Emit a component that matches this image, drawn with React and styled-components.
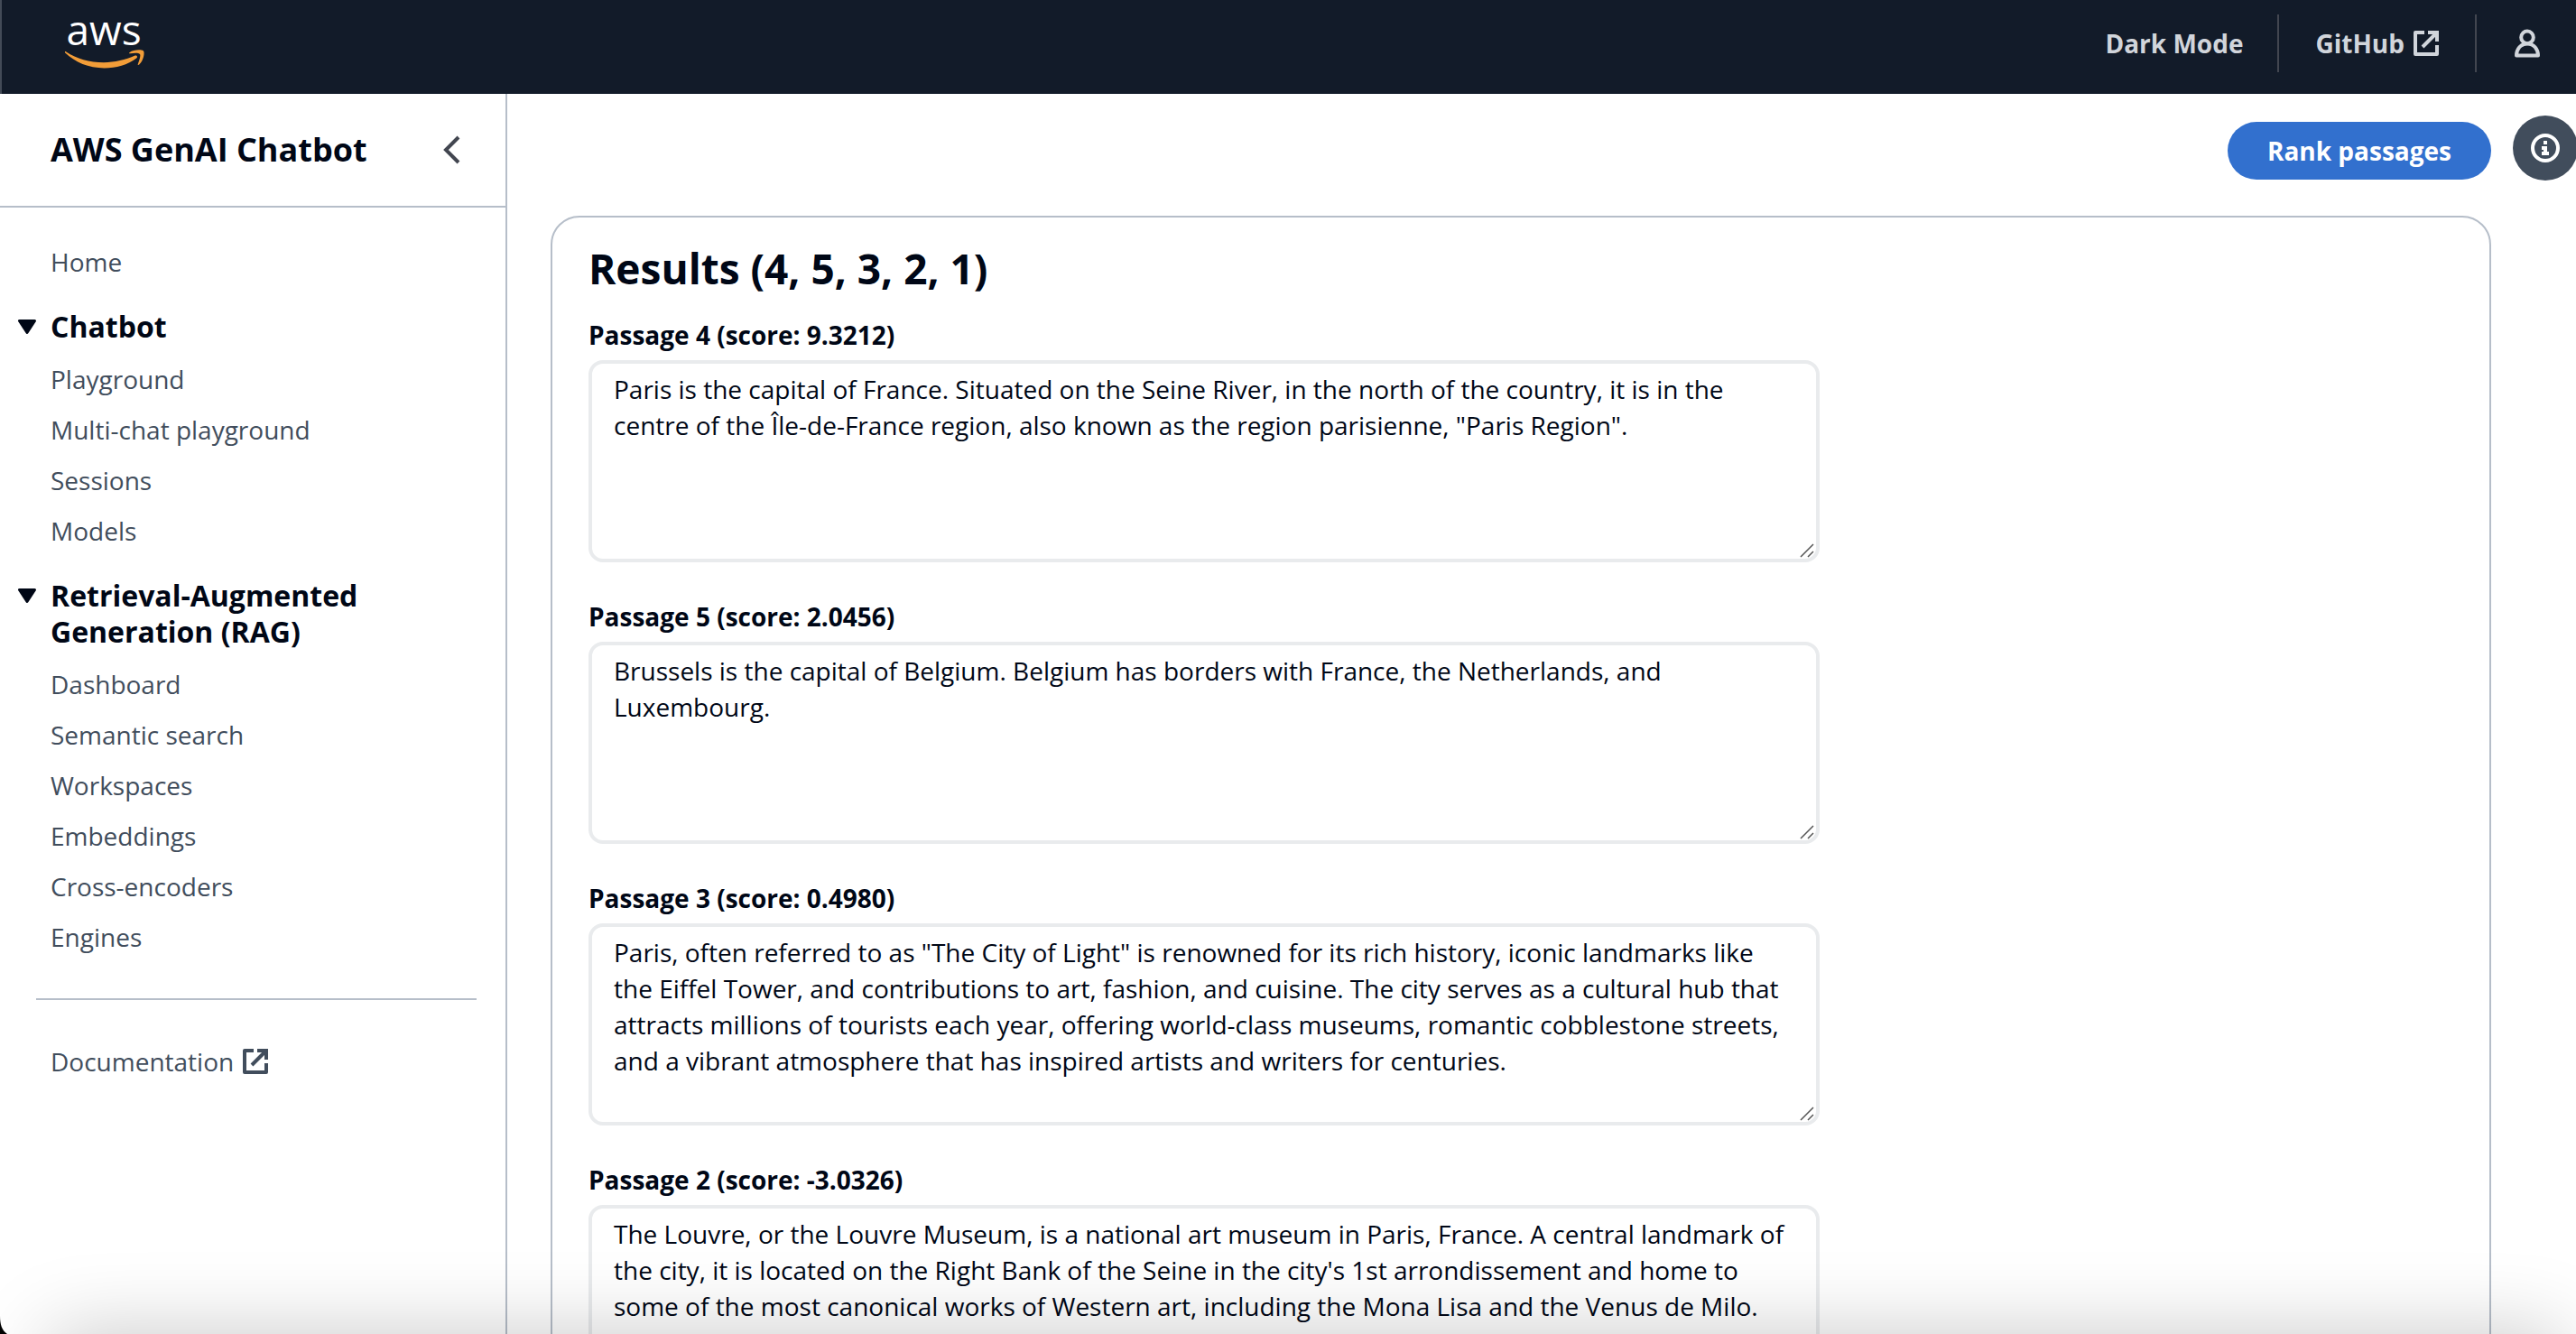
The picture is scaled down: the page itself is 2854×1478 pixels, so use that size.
import React, { useId } from "react";
import styled, { createGlobalStyle, css } from "styled-components";

const GlobalStyle = createGlobalStyle`
  *, *::before, *::after { box-sizing: border-box; }
  body {
    margin: 0;
    background: #ffffff;
    color: #000716;
    font-family: "Open Sans", "Noto Sans", sans-serif;
    font-size: 28px;
    line-height: 40px;
  }
  h1, h2, ul { margin: 0; padding: 0; }
  button, textarea { font: inherit; }
`;

const Shell = styled.div`
  display: flex;
  flex-direction: column;
  height: 100vh;
  overflow: hidden;
`;

const TopBar = styled.header`
  display: flex;
  align-items: center;
  justify-content: space-between;
  flex: none;
  height: 104px;
  padding: 0 0 8px 70px;
  background: #121b29;
  border-left: 2px solid #434b57;
`;

const HomeLink = styled.a`
  display: flex;
`;

const Utilities = styled.nav`
  display: flex;
  align-items: center;
`;

const utility = css`
  display: flex;
  align-items: center;
  gap: 8px;
  height: 64px;
  padding: 0 38px 0 40px;
  border: 0;
  border-left: ${(p) => (p.$divided ? "2px solid #424650" : "0")};
  background: none;
  color: #d1d5db;
  font-weight: 700;
  text-decoration: none;
`;

const UtilityButton = styled.button`
  ${utility}
`;

const UtilityLink = styled.a`
  ${utility}
`;

const Body = styled.div`
  display: flex;
  flex: 1;
  min-height: 0;
`;

const Sidebar = styled.aside`
  flex: none;
  width: 562px;
  border-right: 2px solid #b6bec9;
`;

const SidebarHeader = styled.div`
  display: flex;
  align-items: center;
  justify-content: space-between;
  height: 126px;
  padding: 0 44px 0 56px;
  border-bottom: 2px solid #b6bec9;
`;

const SidebarTitle = styled.h2`
  font-size: 36px;
  line-height: 44px;
  font-weight: 700;
`;

const IconButton = styled.button`
  display: flex;
  padding: 0;
  border: 0;
  background: none;
  color: #424650;
`;

const NavList = styled.ul`
  list-style: none;
  display: flex;
  flex-direction: column;
  gap: ${(p) => (p.$nested ? "16px" : "32px")};
  padding: ${(p) => (p.$nested ? "0" : "40px 32px 0 56px")};
`;

const NavLink = styled.a`
  display: inline-flex;
  align-items: center;
  gap: 8px;
  color: #414d5c;
  text-decoration: none;
`;

const Section = styled.li`
  display: flex;
  flex-direction: column;
  gap: 18px;
`;

const SectionButton = styled.button`
  display: flex;
  align-items: flex-start;
  gap: 16px;
  margin-left: -36px;
  padding: 0;
  border: 0;
  background: none;
  color: #000716;
  font-size: 32px;
  line-height: 40px;
  font-weight: 700;
  text-align: left;
`;

const Caret = styled.svg`
  flex: none;
  margin: 10px 0;
`;

const Divider = styled.hr`
  height: 2px;
  margin: 16px 0 48px -16px;
  border: 0;
  background: #b6bec9;
`;

const Main = styled.main`
  display: flex;
  flex-direction: column;
  flex: 1;
  gap: 40px;
  min-width: 0;
  padding: 31px 0 0 48px;
  overflow: hidden;
`;

const Actions = styled.div`
  display: flex;
  justify-content: flex-end;
  padding-right: 94px;
`;

const PrimaryButton = styled.button`
  height: 64px;
  padding: 0 44px;
  border: 0;
  border-radius: 32px;
  background: #3270ce;
  color: #ffffff;
  font-weight: 700;
`;

const InfoButton = styled.button`
  position: absolute;
  top: 128px;
  right: -2px;
  display: flex;
  align-items: center;
  justify-content: center;
  width: 72px;
  height: 72px;
  padding: 0;
  border: 0;
  border-radius: 50%;
  background: #414d5c;
  color: #ffffff;
`;

const Panel = styled.section`
  display: flex;
  flex-direction: column;
  gap: 24px;
  margin-right: 94px;
  padding: 26px 40px 40px;
  border: 2px solid #b6bec9;
  border-radius: 32px;
`;

const PanelTitle = styled.h1`
  font-size: 46px;
  line-height: 60px;
  font-weight: 700;
`;

const PassageGrid = styled.div`
  display: grid;
  grid-template-columns: repeat(3, minmax(0, 1fr));
  gap: 40px;
`;

const Field = styled.div`
  grid-column: 1 / span 2;
  display: flex;
  flex-direction: column;
  gap: 8px;
`;

const FieldLabel = styled.label`
  font-weight: 700;
`;

const PassageText = styled.textarea`
  display: block;
  width: 100%;
  height: 224px;
  padding: 8px 24px;
  border: 4px solid #e9ebed;
  border-radius: 16px;
  background: transparent;
  color: #000716;
  line-height: 40px;
  resize: none;
  overflow: hidden;
`;

const FieldBox = styled.div`
  position: relative;
`;

const Grip = styled.svg`
  position: absolute;
  right: 6px;
  bottom: 5px;
`;

const WindowShade = styled.div`
  position: fixed;
  left: 56px;
  right: 16px;
  bottom: -200px;
  height: 200px;
  box-shadow: 0 0 90px rgba(0, 0, 0, 0.22);
  pointer-events: none;
`;

const WindowCorner = styled.svg`
  position: fixed;
  left: 0;
  bottom: 0;
`;

function AwsLogo() {
  return (
    <svg width="92" height="96" viewBox="0 0 92 96" role="img" aria-label="aws">
      <text x="43" y="50" textAnchor="middle" fill="#ffffff" fontFamily="Open Sans" fontWeight="500" fontSize="46">
        aws
      </text>
      <g fill="#f29d38">
        <path d="M0.2 58.600C-0.600 57.400 0.200 56.600 1.400 57.400C13 64.800 27 69.200 43 69.200C55 69.200 67 66.400 77.600 61.600C79.600 60.800 81 63 79.200 64.400C69.800 71.600 56.400 75.400 43.600 75.400C26 75.400 11.400 69.200 0.200 58.600Z" />
        <path d="M71.400 58.200C75.600 54.900 84.600 54.800 86.800 56.200C88.800 57.800 87 67.400 82.200 71.600C81.200 72.400 80.400 72 80.800 71C82.200 67.200 84.200 61.600 83 60C81.600 58.400 76.600 58.700 72.600 59.300C71 59.500 70.600 58.900 71.400 58.200Z" />
      </g>
    </svg>
  );
}

function ExternalIcon() {
  return (
    <svg width="32" height="32" viewBox="0 0 16 16" fill="none" stroke="currentColor" strokeWidth="2" strokeLinejoin="round" aria-hidden="true">
      <path d="M7 2H2v12h12V9" />
      <path d="M9 2h5v5M14 2 6 10" strokeLinejoin="miter" />
    </svg>
  );
}

function UserIcon() {
  return (
    <svg width="32" height="32" viewBox="0 0 16 16" fill="none" stroke="currentColor" strokeWidth="2" strokeLinejoin="round" role="img" aria-label="User">
      <circle cx="8" cy="4.700" r="3.400" />
      <path d="M2 14.800c0-3.700 2.400-6.600 6-6.600s6 2.900 6 6.600Z" />
    </svg>
  );
}

function InfoIcon() {
  return (
    <svg width="32" height="32" viewBox="0 0 16 16" aria-hidden="true">
      <circle cx="8" cy="8" r="7" fill="none" stroke="currentColor" strokeWidth="2" />
      <path d="M7 4h2v2H7ZM6 7h3v3h1v2H6v-2h1V9H6Z" fill="currentColor" />
    </svg>
  );
}

function ChevronIcon() {
  return (
    <svg width="32" height="32" viewBox="0 0 16 16" fill="none" stroke="currentColor" strokeWidth="2" aria-hidden="true">
      <path d="M12 1 5 8l7 7" />
    </svg>
  );
}

const sections = [
  { title: "Chatbot", links: ["Playground", "Multi-chat playground", "Sessions", "Models"] },
  {
    title: "Retrieval-Augmented Generation (RAG)",
    links: ["Dashboard", "Semantic search", "Workspaces", "Embeddings", "Cross-encoders", "Engines"],
  },
];

const passages = [
  {
    label: "Passage 4 (score: 9.3212)",
    text: 'Paris is the capital of France. Situated on the Seine River, in the north of the country, it is in the centre of the Île-de-France region, also known as the region parisienne, "Paris Region".',
  },
  {
    label: "Passage 5 (score: 2.0456)",
    text: "Brussels is the capital of Belgium. Belgium has borders with France, the Netherlands, and Luxembourg.",
  },
  {
    label: "Passage 3 (score: 0.4980)",
    text: 'Paris, often referred to as "The City of Light" is renowned for its rich history, iconic landmarks like the Eiffel Tower, and contributions to art, fashion, and cuisine. The city serves as a cultural hub that attracts millions of tourists each year, offering world-class museums, romantic cobblestone streets, and a vibrant atmosphere that has inspired artists and writers for centuries.',
  },
  {
    label: "Passage 2 (score: -3.0326)",
    text: "The Louvre, or the Louvre Museum, is a national art museum in Paris, France. A central landmark of the city, it is located on the Right Bank of the Seine in the city's 1st arrondissement and home to some of the most canonical works of Western art, including the Mona Lisa and the Venus de Milo.",
  },
];

function NavSection({ title, links }) {
  return (
    <Section>
      <SectionButton type="button" aria-expanded="true">
        <Caret width="20" height="20" viewBox="0 0 20 20" aria-hidden="true">
          <path d="M1.500 3.500h17L10 16.500Z" fill="currentColor" stroke="currentColor" strokeWidth="3" strokeLinejoin="round" />
        </Caret>
        <span>{title}</span>
      </SectionButton>
      <NavList $nested>
        {links.map((link) => (
          <li key={link}>
            <NavLink href="#">{link}</NavLink>
          </li>
        ))}
      </NavList>
    </Section>
  );
}

function Passage({ label, text }) {
  const id = useId();
  return (
    <Field>
      <FieldLabel htmlFor={id}>{label}</FieldLabel>
      <FieldBox>
        <PassageText id={id} readOnly value={text} />
        <Grip width="16" height="16" viewBox="0 0 16 16" stroke="#555555" strokeWidth="1.500" aria-hidden="true">
          <path d="M1 15 15 1M9 15l6-6" />
        </Grip>
      </FieldBox>
    </Field>
  );
}

export default function App() {
  return (
    <>
      <GlobalStyle />
      <Shell>
        <TopBar>
          <HomeLink href="#">
            <AwsLogo />
          </HomeLink>
          <Utilities>
            <UtilityButton type="button">Dark Mode</UtilityButton>
            <UtilityLink href="#" $divided>
              GitHub
              <ExternalIcon />
            </UtilityLink>
            <UtilityButton type="button" $divided>
              <UserIcon />
            </UtilityButton>
          </Utilities>
        </TopBar>
        <Body>
          <Sidebar>
            <SidebarHeader>
              <SidebarTitle>AWS GenAI Chatbot</SidebarTitle>
              <IconButton type="button" aria-label="Close navigation">
                <ChevronIcon />
              </IconButton>
            </SidebarHeader>
            <NavList>
              <li>
                <NavLink href="#">Home</NavLink>
              </li>
              {sections.map((s) => (
                <NavSection key={s.title} title={s.title} links={s.links} />
              ))}
              <li>
                <Divider />
                <NavLink href="#">
                  Documentation
                  <ExternalIcon />
                </NavLink>
              </li>
            </NavList>
          </Sidebar>
          <Main>
            <Actions>
              <PrimaryButton type="button">Rank passages</PrimaryButton>
            </Actions>
            <Panel>
              <PanelTitle>Results (4, 5, 3, 2, 1)</PanelTitle>
              <PassageGrid>
                {passages.map((p) => (
                  <Passage key={p.label} label={p.label} text={p.text} />
                ))}
              </PassageGrid>
            </Panel>
          </Main>
        </Body>
      </Shell>
      <InfoButton type="button" aria-label="Info">
        <InfoIcon />
      </InfoButton>
      <WindowShade />
      <WindowCorner width="8" height="20" viewBox="0 0 8 20" aria-hidden="true">
        <path d="M0 0C0 9 2 16 8 20H0Z" fill="#000000" />
      </WindowCorner>
    </>
  );
}
